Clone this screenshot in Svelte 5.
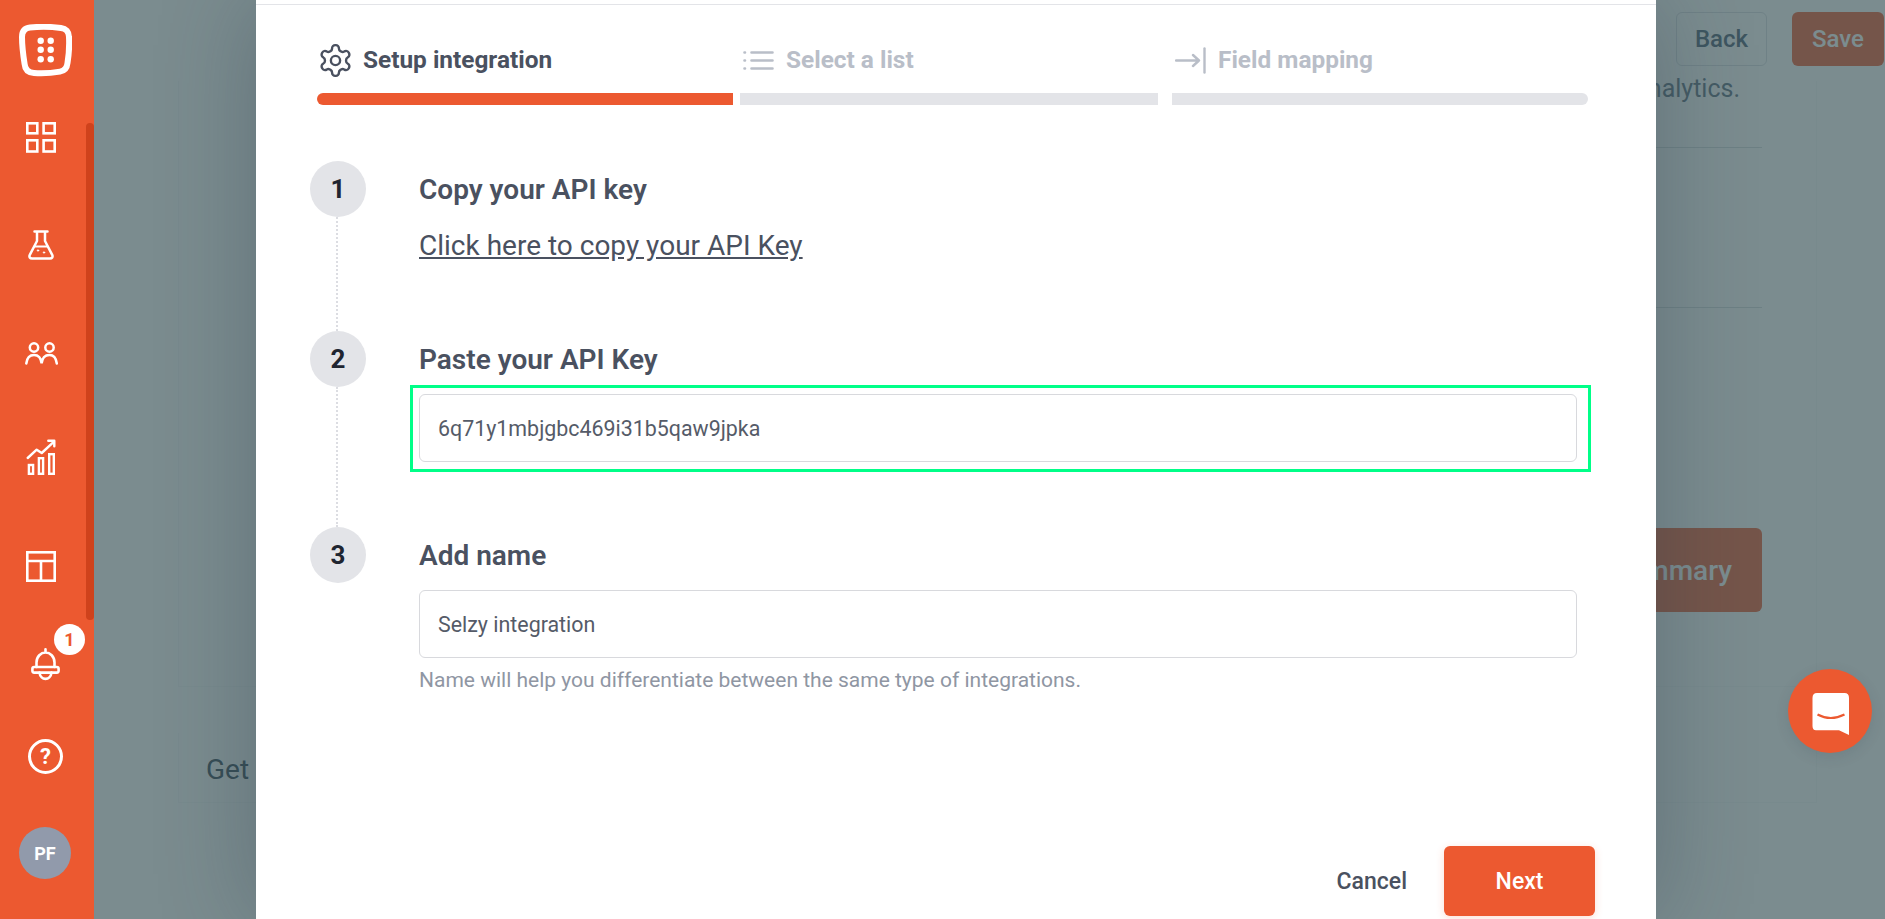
<script>
  const gear = "M12.22 2h-.44a2 2 0 0 0-2 2v.18a2 2 0 0 1-1 1.73l-.43.25a2 2 0 0 1-2 0l-.15-.08a2 2 0 0 0-2.73.73l-.22.38a2 2 0 0 0 .73 2.73l.15.1a2 2 0 0 1 1 1.72v.51a2 2 0 0 1-1 1.74l-.15.09a2 2 0 0 0-.73 2.73l.22.38a2 2 0 0 0 2.73.73l.15-.08a2 2 0 0 1 2 0l.43.25a2 2 0 0 1 1 1.73V20a2 2 0 0 0 2 2h.44a2 2 0 0 0 2-2v-.18a2 2 0 0 1 1-1.73l.43-.25a2 2 0 0 1 2 0l.15.08a2 2 0 0 0 2.73-.73l.22-.39a2 2 0 0 0-.73-2.73l-.15-.08a2 2 0 0 1-1-1.74v-.5a2 2 0 0 1 1-1.74l.15-.09a2 2 0 0 0 .73-2.73l-.22-.38a2 2 0 0 0-2.73-.73l-.15.08a2 2 0 0 1-2 0l-.43-.25a2 2 0 0 1-1-1.73V4a2 2 0 0 0-2-2z";
</script>

<div class="page">
  <aside class="sidebar">
    <div class="logo">
      <svg width="53" height="53" viewBox="0 0 53 53" fill="none">
        <path d="M11 3.5C20 2.6 32 2.6 42 4C47 4.6 50 8 50 13C50.4 21 50 30 48.5 39C48 44 45 47 41 47.6C33 49 24 49.6 15 49C9 48.6 6 45 5.6 40C4 30 3 21 3 13C3 7 6 4 11 3.5Z" stroke="#fff" stroke-width="6"/>
        <g fill="#fff">
          <circle cx="21.7" cy="16.7" r="3.2"/><circle cx="31.7" cy="16.7" r="3.2"/>
          <circle cx="21.7" cy="25.7" r="3.2"/><circle cx="31.7" cy="25.7" r="3.2"/>
          <circle cx="21.7" cy="35.3" r="3.2"/><circle cx="31.7" cy="35.3" r="3.2"/>
        </g>
      </svg>
    </div>
    <nav class="nav">
      <div class="thumb"></div>
      <div class="slot">
        <svg width="30" height="31" viewBox="0 0 30 31" fill="none" stroke="#fff" stroke-width="2.6">
          <rect x="1.3" y="1.3" width="10" height="10"/><rect x="17.6" y="1.3" width="11.1" height="10"/>
          <rect x="1.3" y="18.3" width="10" height="11.2"/><rect x="17.6" y="18.3" width="11.1" height="11.2"/>
        </svg>
      </div>
      <div class="slot">
        <svg width="26" height="30" viewBox="0 0 26 30" fill="none" stroke="#fff" stroke-width="2.5" stroke-linecap="round" stroke-linejoin="round">
          <path d="M6.5 1.4H19.5M9 1.4V11L1.8 24.8C0.8 27 2 28.6 4 28.6H22C24 28.6 25.2 27 24.2 24.8L17 11V1.4"/>
          <path d="M6.5 16.5H19.5" stroke-width="2"/>
          <circle cx="10" cy="20.5" r="0.7" fill="#fff" stroke-width="1"/><circle cx="16" cy="22.5" r="0.7" fill="#fff" stroke-width="1"/>
        </svg>
      </div>
      <div class="slot">
        <svg width="33" height="23" viewBox="0 0 33 23" fill="none" stroke="#fff" stroke-width="2.5" stroke-linecap="round">
          <circle cx="9" cy="5.5" r="4.2"/><circle cx="24.5" cy="5.5" r="4.2"/>
          <path d="M1.3 21.5C2 15.5 5 13 9 13C13 13 16 15.5 16.6 21.5C17.2 15.5 20 13 24.5 13C28.5 13 31 15.5 31.8 21.5"/>
        </svg>
      </div>
      <div class="slot">
        <svg class="chart" width="32" height="37" viewBox="0 0 32 37" fill="none" stroke="#fff" stroke-width="2.4">
          <rect x="3.9" y="26" width="4.2" height="8.8"/><rect x="13.9" y="19.2" width="4.2" height="15.6"/><rect x="24.2" y="15.2" width="4.6" height="19.6"/>
          <path d="M2.7 19L11.7 10.7L16.7 14L29 2.7M23.3 1.7H29.3V7.3" stroke-linecap="round" stroke-linejoin="round"/>
        </svg>
      </div>
      <div class="slot">
        <svg class="tpl" width="30" height="31" viewBox="0 0 30 31" fill="none" stroke="#fff" stroke-width="2.6">
          <rect x="1.3" y="1.3" width="27.4" height="28.4"/><path d="M1.3 10H28.7M15 10V29.7"/>
        </svg>
      </div>
    </nav>
    <div class="bell">
      <svg width="29" height="36" viewBox="0 0 29 36" fill="none" stroke="#fff" stroke-width="2.6" stroke-linecap="round" stroke-linejoin="round">
        <path d="M14.5 1.3V4.5M5.5 19V14.5C5.5 8.5 10 4.5 14.5 4.5C19 4.5 23.5 8.5 23.5 14.5V19"/>
        <rect x="1.4" y="19" width="26.2" height="5.6" rx="1.8"/>
        <path d="M8.5 24.6C9.5 33 19.5 33 20.5 24.6"/>
      </svg>
      <span class="badge">1</span>
    </div>
    <div class="help">
      <svg width="35" height="35" viewBox="0 0 35 35" fill="none">
        <circle cx="17.5" cy="17.5" r="16" stroke="#fff" stroke-width="3"/>
        <text x="17.5" y="25" text-anchor="middle" fill="#fff" class="q">?</text>
      </svg>
    </div>
    <div class="avatar">PF</div>
  </aside>

  <main class="content">
    <div class="topbar">
      <button class="ghost">Back</button>
      <button class="primary">Save</button>
    </div>
    <section class="panel">
      <p class="intro">analytics.</p>
      <hr class="line first" />
      <hr class="line" />
      <button class="primary summary">Summary</button>
    </section>
    <section class="panel bottom"><span>Get</span></section>
  </main>

  <div class="overlay">
    <div class="modal">
      <div class="rule"></div>
      <div class="steps">
        <div class="step s1">
          <div class="label active">
            <svg class="gear" width="37" height="37" viewBox="0 0 24 24" fill="none" stroke="#4a5160" stroke-width="1.55" stroke-linecap="round" stroke-linejoin="round"><path d={gear}/><circle cx="12" cy="12" r="3"/></svg>
            <span>Setup integration</span>
          </div>
          <div class="bar on"></div>
        </div>
        <div class="step s2">
          <div class="label">
            <svg width="31" height="31" viewBox="0 0 31 31" fill="none" stroke="#b9bec8" stroke-width="2.6" stroke-linecap="round">
              <path d="M8.5 7.5H29.5M8.5 15.5H29.5M8.5 23.5H29.5"/><path d="M1.5 7.5H2M1.5 15.5H2M1.5 23.5H2"/>
            </svg>
            <span>Select a list</span>
          </div>
          <div class="bar"></div>
        </div>
        <div class="step s3">
          <div class="label">
            <svg width="31" height="31" viewBox="0 0 31 31" fill="none" stroke="#b9bec8" stroke-width="2.4" stroke-linecap="round" stroke-linejoin="round">
              <path d="M1 15.5H24M18 10L24 15.5L18 21"/><path d="M29.5 3.5V27.5"/>
            </svg>
            <span>Field mapping</span>
          </div>
          <div class="bar last"></div>
        </div>
      </div>

      <div class="form">
        <div class="row r1">
          <div class="rail"><div class="num">1</div><div class="conn"></div></div>
          <div class="body">
            <h3>Copy your API key</h3>
            <a class="copy" href="#top">Click here to copy your API Key</a>
          </div>
        </div>
        <div class="row r2">
          <div class="rail"><div class="num">2</div><div class="conn"></div></div>
          <div class="body">
            <h3>Paste your API Key</h3>
            <div class="field highlighted"><input value="6q71y1mbjgbc469i31b5qaw9jpka" /></div>
          </div>
        </div>
        <div class="row r3">
          <div class="rail"><div class="num">3</div></div>
          <div class="body">
            <h3>Add name</h3>
            <div class="field"><input value="Selzy integration" /></div>
            <p class="hint">Name will help you differentiate between the same type of integrations.</p>
          </div>
        </div>
      </div>

      <div class="footer">
        <button class="cancel">Cancel</button>
        <button class="next">Next</button>
      </div>
    </div>
  </div>

  <button class="chat" aria-label="Chat">
    <svg width="38" height="43" viewBox="0 0 38 43">
      <path d="M5 0H32.5Q37 0 37 5V42L27 37.2H4Q0.5 37.2 0.5 33V5Q0.5 0 5 0Z" fill="#fff"/>
      <path d="M5.5 21.5Q18.5 28.5 32.5 21.5" fill="none" stroke="#ec5930" stroke-width="2.2"/>
    </svg>
  </button>
</div>

<style>
  :global(body) { margin: 0; font-family: Roboto, "Liberation Sans", sans-serif; }
  .page { position: relative; display: flex; width: 1885px; height: 919px; overflow: hidden; background: #fff; }

  .sidebar { position: relative; z-index: 3; flex: none; width: 94px; background: #ec5930; display: flex; flex-direction: column; }
  .logo { height: 83px; box-sizing: border-box; padding: 24px 0 0 19px; }
  .nav { position: relative; height: 540px; }
  .thumb { position: absolute; right: 0; top: 40px; width: 8px; height: 497px; background: #cf421c; border-radius: 4px; }
  .slot { height: 108px; padding-right: 12px; display: flex; align-items: center; justify-content: center; box-sizing: border-box; }
  .chart { margin-bottom: 7px; }
  .tpl { margin-bottom: 5px; }
  .bell { position: relative; height: 86px; padding-right: 4px; box-sizing: border-box; display: flex; align-items: center; justify-content: center; }
  .badge { position: absolute; left: 54px; top: 1px; width: 31px; height: 31px; border-radius: 50%; background: #fff; color: #ec5930; font-size: 18px; font-weight: 700; display: flex; align-items: center; justify-content: center; }
  .help { height: 95px; padding-right: 4px; box-sizing: border-box; display: flex; align-items: center; justify-content: center; }
  .q { font: 700 22px Roboto, sans-serif; }
  .avatar { width: 52px; height: 52px; margin: 23px 0 0 19px; border-radius: 50%; background: #919aab; color: #fff; font-size: 18px; font-weight: 700; display: flex; align-items: center; justify-content: center; }

  .content { flex: 1; min-width: 0; display: flex; flex-direction: column; }
  .topbar { height: 81px; box-sizing: border-box; padding: 12px 1px 0 0; display: flex; justify-content: flex-end; gap: 25px; align-items: flex-start; }
  button { font-family: inherit; cursor: pointer; }
  .ghost, .primary { width: 92px; height: 54px; border-radius: 6px; font-size: 24px; font-weight: 500; padding: 0; }
  .ghost { background: #fff; border: 1px solid #d9dde2; color: #465a70; width: 91px; }
  .primary { background: #ec5930; border: 0; color: #fff; }
  .panel { margin: 0 68px 0 84px; border: solid rgba(70,90,110,.05); border-width: 0 1px 1px 1px; }
  .panel { height: 606px; box-sizing: border-box; display: flex; flex-direction: column; align-items: flex-end; padding-right: 54px; }
  .intro { margin: -1px 22px 0 0; font-size: 25px; line-height: 18px; color: #5a6a7c; }
  .line { align-self: stretch; border: 0; height: 1px; background: #d4d9de; margin: 159px 0 0 200px; }
  .line.first { margin-top: 49px; }
  .summary { width: 190px; height: 84px; margin-top: 220px; font-size: 28px; text-align: right; padding-right: 30px; }
  .panel.bottom { height: 70px; margin-top: 46px; padding: 4px 0 0 27px; align-items: flex-start; justify-content: center; font-size: 28px; color: #2e4050; }

  .overlay { position: absolute; inset: 0; z-index: 2; background: rgba(58, 84, 88, .67); padding-left: 256px; }
  .modal { width: 1400px; height: 100%; box-sizing: border-box; background: #fff; padding-top: 4px; box-shadow: 0 0 90px rgba(40, 55, 70, .32); display: flex; flex-direction: column; padding-left: 54px; }
  .rule { flex: none; height: 1px; margin-left: -54px; background: #e3e4e8; }

  .steps { display: flex; padding: 40px 0 0 7px; }
  .step { flex: none; }
  .s1 { width: 416px; margin-right: 7px; }
  .s2 { width: 418px; margin-right: 14px; }
  .s3 { width: 416px; }
  .label { height: 31px; display: flex; align-items: center; gap: 12px; padding-left: 3px; margin-bottom: 17px; font-size: 24.4px; font-weight: 700; color: #b9bec8; }
  .label span { padding-bottom: 2px; }
  .label.active { color: #4a5160; }
  .gear { margin: -3px; }
  .bar { height: 12px; background: #e3e4e8; }
  .bar.on { background: #ec5930; border-radius: 6px 0 0 6px; }
  .bar.last { border-radius: 0 6px 6px 0; }

  .form { margin-top: 56px; flex: 1; }
  .row { display: flex; gap: 53px; }
  .r1 { height: 170px; }
  .r2 { height: 196px; }
  .rail { width: 56px; display: flex; flex-direction: column; align-items: center; }
  .num { flex: none; width: 56px; height: 56px; border-radius: 50%; background: #e3e4e8; color: #1f2530; font-size: 26px; font-weight: 700; display: flex; align-items: center; justify-content: center; }
  .conn { flex: 1; margin-right: 2px; border-left: 2px dotted #dcdde2; }
  .body { width: 1158px; padding-top: 12px; }
  h3 { margin: 0; font-size: 28px; line-height: 34px; font-weight: 600; color: #4a5160; }
  .copy { display: inline-block; margin-top: 22px; font-size: 28px; line-height: 34px; color: #4a5160; }
  .field { position: relative; margin-top: 17px; }
  .field input { display: block; width: 100%; height: 68px; box-sizing: border-box; border: 1px solid #d8d9dd; border-radius: 6px; padding: 0 18px; font: 400 21.4px Roboto, sans-serif; color: #555b68; background: #fff; outline: none; }
  .highlighted::after { content: ""; position: absolute; inset: -9px -14px -10px -9px; border: 3px solid #00ff88; pointer-events: none; }
  .hint { margin: 10px 0 0; font-size: 21px; line-height: 24px; color: #8f96a3; }

  .footer { flex: none; display: flex; justify-content: flex-end; align-items: center; gap: 37px; padding: 0 61px 3px 0; }
  .cancel { background: none; border: 0; padding: 0; font-size: 23px; font-weight: 500; color: #4a5160; }
  .next { width: 151px; height: 70px; border: 0; border-radius: 6px; background: #ec5930; color: #fff; font-size: 23px; font-weight: 500; box-shadow: 0 2px 8px rgba(238, 90, 48, .2); }

  .chat { position: absolute; z-index: 4; right: 13px; bottom: 166px; width: 84px; height: 84px; padding: 6px 0 0 1px; border: 0; border-radius: 50%; background: #ec5930; box-shadow: 0 4px 14px rgba(40,55,70,.12); display: flex; align-items: center; justify-content: center; }
</style>
